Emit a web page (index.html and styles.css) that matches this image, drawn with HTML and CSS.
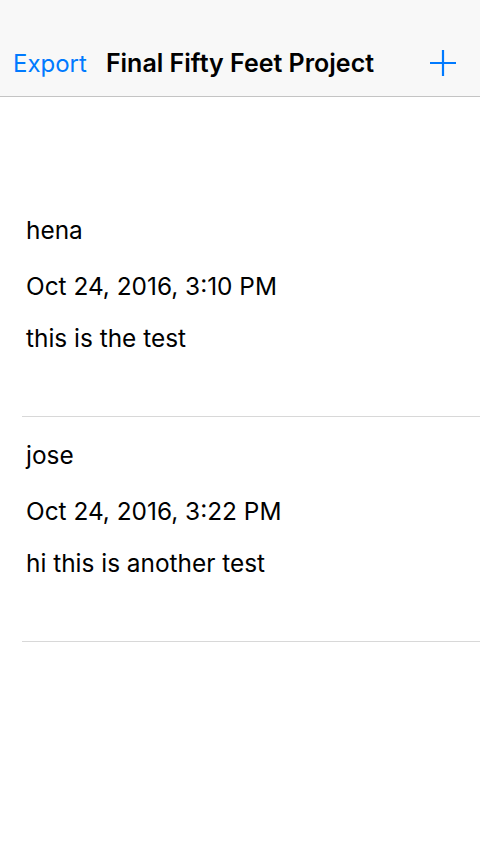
FILE: index.html
```html
<!DOCTYPE html>
<html>
<head>
<meta charset="utf-8">
<link rel="stylesheet" href="styles.css">
</head>
<body>
<header class="nav">
  <div class="nav-bar">
    <span class="nav-btn">Export</span>
    <span class="nav-title">Final Fifty Feet Project</span>
    <span class="nav-add">
      <svg width="28" height="28" viewBox="0 0 28 28"><path d="M14 1V27M1 14H27" stroke="#007aff" stroke-width="2.2" fill="none"/></svg>
    </span>
  </div>
</header>
<main class="list">
  <div class="spacer"></div>
  <div class="row">
    <div class="name">hena</div>
    <div class="date">Oct 24, 2016, 3:10 PM</div>
    <div class="msg">this is the test</div>
  </div>
  <div class="row">
    <div class="name">jose</div>
    <div class="date">Oct 24, 2016, 3:22 PM</div>
    <div class="msg">hi this is another test</div>
  </div>
</main>
</body>
</html>
```
FILE: styles.css
```css
html, body { margin: 0; padding: 0; background: #fff; }
body { width: 480px; height: 852px; font-family: Inter, "Noto Sans", sans-serif; color: #000; overflow: hidden; }
.nav { background: #f8f8f8; border-bottom: 1px solid #c4c4c4; height: 97px; box-sizing: border-box; padding-top: 40px; }
.nav-bar { height: 46px; display: flex; align-items: center; padding: 0 0 0 13px; position: relative; }
.nav-btn { color: #007aff; font-size: 24px; }
.nav-title { font-weight: 600; font-size: 25px; margin-left: 19px; }
.nav-add { margin-left: auto; margin-right: 23px; display: flex; }
.spacer { height: 95px; }
.row { margin-left: 22px; border-bottom: 1px solid #d8d8d8; height: 225px; box-sizing: border-box; padding-left: 4px; padding-top: 23px; font-size: 24.4px; }
.row div { line-height: 30px; }
.date { margin-top: 26px; }
.msg { margin-top: 22px; }
```
